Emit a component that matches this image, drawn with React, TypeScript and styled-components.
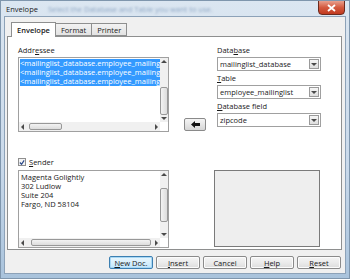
import React from 'react';
import styled, { createGlobalStyle } from 'styled-components';

const GlobalStyle = createGlobalStyle`
  html, body { margin: 0; padding: 0; background: #fff; }
  body { font-family: "Open Sans", "Liberation Sans", sans-serif; }
`

const addressLines = [
  '<mailinglist_database.employee_mailinglist.',
  '<mailinglist_database.employee_mailinglist.',
  '<mailinglist_database.employee_mailinglist.',
]

const senderLines = ['Magenta Golightly', '302 Ludlow', 'Suite 204', 'Fargo, ND 58104']

const Arrow = ({ dir }: { dir: 'up' | 'down' | 'left' | 'right' }) => {
  const pts = {
    up: '0,4 3,1 6,4',
    down: '0,2 3,5 6,2',
    left: '4,0 1,3 4,6',
    right: '2,0 5,3 2,6',
  }[dir]
  return (
    <svg width="6" height="6" viewBox="0 0 6 6">
      <polygon points={pts} fill="#4a4a4a" />
    </svg>
  )
}

const VScroll = ({ top, size }: { top: number, size: number }) => (
  <VBar>
    <Arrow dir="up" />
    <VTrack>
      <VThumb style={{ top, height: size }} />
    </VTrack>
    <Arrow dir="down" />
  </VBar>
)

const HScroll = ({ left, size }: { left: number, size: number }) => (
  <HBar>
    <Arrow dir="left" />
    <HTrack>
      <HThumb style={{ left, width: size }} />
    </HTrack>
    <Arrow dir="right" />
  </HBar>
)

const Combo = ({ value }: { value: string }) => (
  <ComboBox>
    <ComboText>{value}</ComboText>
    <ComboButton><Arrow dir="down" /></ComboButton>
  </ComboBox>
)

const App = () => {
  return (
    <Window>
      <GlobalStyle />
      <TitleBar>
        <Title>Envelope</Title>
        <Blur>Select the Database and Table you want to use.</Blur>
        <Close>
          <svg width="9" height="8" viewBox="0 0 9 8">
            <path d="M1 1 L8 7 M8 1 L1 7" stroke="#fff" strokeWidth="1.8" />
          </svg>
        </Close>
      </TitleBar>
      <Client>
        <TabBar>
          <Tab active>Envelope</Tab>
          <Tab>Format</Tab>
          <Tab>Printer</Tab>
        </TabBar>
        <Pane>
          <TopRow>
            <LeftCol>
              <Label>Addr<u>e</u>ssee</Label>
              <ListBox>
                <ListBody>
                  <ListText>
                    {addressLines.map((line, i) => (
                      <Selected key={i}>{line}</Selected>
                    ))}
                  </ListText>
                  <VScroll top={22} size={28} />
                </ListBody>
                <HScroll left={3} size={33} />
              </ListBox>
            </LeftCol>
            <MidCol>
              <ArrowButton>
                <svg width="9" height="7" viewBox="0 0 9 7">
                  <path d="M0 3.5 L4 0 L4 2 L9 2 L9 5 L4 5 L4 7 Z" fill="#111" />
                </svg>
              </ArrowButton>
            </MidCol>
            <RightCol>
              <Label>Data<u>b</u>ase</Label>
              <Combo value="mailinglist_database" />
              <Label><u>T</u>able</Label>
              <Combo value="employee_mailinglist" />
              <Label><u>D</u>atabase field</Label>
              <Combo value="zipcode" />
            </RightCol>
          </TopRow>
          <BottomRow>
            <LeftCol>
              <CheckRow>
                <CheckBox>
                  <svg width="7" height="7" viewBox="0 0 7 7">
                    <path d="M1 3.5 L3 5.5 L6 1" stroke="#2b4a8a" strokeWidth="1.4" fill="none" />
                  </svg>
                </CheckBox>
                <CheckLabel><u>S</u>ender</CheckLabel>
              </CheckRow>
              <SenderBox>
                <ListBody>
                  <SenderText>
                    {senderLines.map((line) => <div key={line}>{line}</div>)}
                  </SenderText>
                  <VScroll top={10} size={34} />
                </ListBody>
                <HScroll left={5} size={120} />
              </SenderBox>
            </LeftCol>
            <Preview />
          </BottomRow>
        </Pane>
        <ButtonRow>
          <Button primary><u>N</u>ew Doc.</Button>
          <Button><u>I</u>nsert</Button>
          <Button>Cancel</Button>
          <Button><u>H</u>elp</Button>
          <Button><u>R</u>eset</Button>
        </ButtonRow>
      </Client>
    </Window>
  )
};

const Window = styled.div`
  width: 350px;
  height: 279px;
  box-sizing: border-box;
  display: flex;
  flex-direction: column;
  background: linear-gradient(180deg, #dbe6f1 0%, #c9d9ea 60%, #a9c3dc 100%);
  border: 1px solid #7f96ad;
  padding: 0 3px 4px 3px;
  overflow: hidden;
`
const TitleBar = styled.div`
  height: 15px;
  display: flex;
  align-items: center;
  position: relative;
  font-size: 7.5px;
  color: #1a1a1a;
`
const Title = styled.span`
  margin-left: 2px;
`
const Blur = styled.span`
  margin-left: 10px;
  color: #8fa7c4;
  filter: blur(1.2px);
  white-space: nowrap;
`
const Close = styled.div`
  position: absolute;
  right: 1px;
  top: -1px;
  width: 27px;
  height: 15px;
  border-radius: 0 0 4px 4px;
  border: 1px solid #6b2a1e;
  box-sizing: border-box;
  background: linear-gradient(180deg, #e8a08e 0%, #d45a3f 50%, #c0391f 100%);
  display: flex;
  align-items: center;
  justify-content: center;
`
const Client = styled.div`
  flex: 1;
  display: flex;
  flex-direction: column;
  background: #f0f0f0;
  border: 1px solid #8da2b8;
  padding: 4px 3px 0 2px;
  font-size: 7.5px;
  color: #1a1a1a;
`
const TabBar = styled.div`
  display: flex;
  padding-left: 4px;
  height: 15px;
  align-items: flex-end;
`
const Tab = styled.div<{ active?: boolean }>`
  height: ${p => p.active ? 15 : 13}px;
  box-sizing: border-box;
  padding: 0 5px;
  display: flex;
  align-items: center;
  border: 1px solid #8e8f8f;
  border-bottom: ${p => p.active ? 'none' : '1px solid #8e8f8f'};
  margin-left: ${p => p.active ? 0 : -1}px;
  background: ${p => p.active ? '#fff' : 'linear-gradient(180deg, #f2f2f2, #e3e3e3)'};
  font-weight: ${p => p.active ? 600 : 400};
  position: relative;
  z-index: ${p => p.active ? 1 : 0};
  margin-bottom: ${p => p.active ? -1 : 0}px;
`
const Pane = styled.div`
  height: 214px;
  box-sizing: border-box;
  background: #fff;
  border: 1px solid #8e8f8f;
  padding: 8px 0 0 10px;
  display: flex;
  flex-direction: column;
`
const TopRow = styled.div`
  display: flex;
`
const BottomRow = styled.div`
  display: flex;
  align-items: flex-end;
  margin-top: 25px;
`
const LeftCol = styled.div`
  width: 151px;
  display: flex;
  flex-direction: column;
`
const MidCol = styled.div`
  width: 48px;
  display: flex;
  align-items: flex-end;
  padding-left: 15px;
  box-sizing: border-box;
`
const RightCol = styled.div`
  width: 104px;
  display: flex;
  flex-direction: column;
`
const Label = styled.div`
  height: 11px;
  line-height: 11px;
  margin-bottom: 1px;
  margin-top: 2px;
  &:first-child { margin-top: 0; }
`
const ListBox = styled.div`
  height: 75px;
  box-sizing: border-box;
  border: 1px solid #a0a0a0;
  display: flex;
  flex-direction: column;
`
const ListBody = styled.div`
  flex: 1;
  display: flex;
  min-height: 0;
`
const ListText = styled.div`
  flex: 1;
  overflow: hidden;
  padding: 1px 0 0 1px;
`
const Selected = styled.div`
  background: #3399ff;
  color: #fff;
  height: 9px;
  line-height: 9px;
  white-space: nowrap;
`
const VBar = styled.div`
  width: 8px;
  display: flex;
  flex-direction: column;
  align-items: center;
  background: #f0f0f0;
  padding: 1px 0;
`
const VTrack = styled.div`
  flex: 1;
  width: 100%;
  position: relative;
`
const VThumb = styled.div`
  position: absolute;
  left: 0;
  right: 0;
  border: 1px solid #989898;
  border-radius: 2px;
  background: linear-gradient(90deg, #f3f3f3, #dcdcdc);
  box-sizing: border-box;
`
const HBar = styled.div`
  height: 9px;
  display: flex;
  align-items: center;
  background: #f0f0f0;
  padding: 0 1px;
  margin-right: 8px;
`
const HTrack = styled.div`
  flex: 1;
  height: 100%;
  position: relative;
`
const HThumb = styled.div`
  position: absolute;
  top: 1px;
  bottom: 1px;
  border: 1px solid #989898;
  border-radius: 2px;
  background: linear-gradient(180deg, #f3f3f3, #dcdcdc);
  box-sizing: border-box;
`
const ComboBox = styled.div`
  height: 14px;
  box-sizing: border-box;
  border: 1px solid #a0a0a0;
  display: flex;
  background: #fff;
`
const ComboText = styled.div`
  flex: 1;
  padding-left: 2px;
  line-height: 12px;
  white-space: nowrap;
  overflow: hidden;
`
const ComboButton = styled.div`
  width: 10px;
  margin: 1px;
  border: 1px solid #9a9a9a;
  box-sizing: border-box;
  background: linear-gradient(180deg, #f6f6f6, #dedede);
  display: flex;
  align-items: center;
  justify-content: center;
`
const ArrowButton = styled.div`
  width: 22px;
  height: 13px;
  box-sizing: border-box;
  border: 1px solid #8a8a8a;
  border-radius: 2px;
  background: linear-gradient(180deg, #f5f5f5 0%, #e6e6e6 50%, #d6d6d6 100%);
  display: flex;
  align-items: center;
  justify-content: center;
  margin-bottom: 1px;
`
const CheckRow = styled.div`
  display: flex;
  align-items: center;
  height: 10px;
  margin-bottom: 3px;
`
const CheckBox = styled.div`
  width: 8px;
  height: 8px;
  box-sizing: border-box;
  border: 1px solid #8f8f8f;
  background: #f4f4f4;
  display: flex;
  align-items: center;
  justify-content: center;
  margin-right: 3px;
`
const CheckLabel = styled.span``
const SenderBox = styled(ListBox)`
  height: 78px;
`
const SenderText = styled.div`
  flex: 1;
  padding: 2px 0 0 2px;
  line-height: 9px;
`
const Preview = styled.div`
  width: 106px;
  height: 77px;
  box-sizing: border-box;
  margin-left: 45px;
  margin-bottom: 1px;
  border: 1px solid #7a7a7a;
  background: #eeeeee;
`
const ButtonRow = styled.div`
  display: flex;
  justify-content: flex-end;
  gap: 3px;
  padding: 6px 1px 0 0;
`
const Button = styled.div<{ primary?: boolean }>`
  width: 44px;
  height: 13px;
  box-sizing: border-box;
  border: 1px solid ${p => p.primary ? '#3c7fb1' : '#8a8a8a'};
  border-radius: 2px;
  background: ${p => p.primary
    ? 'linear-gradient(180deg, #eaf6fd 0%, #d9f0fc 50%, #bee6fd 100%)'
    : 'linear-gradient(180deg, #f5f5f5 0%, #ebebeb 50%, #dddddd 100%)'};
  box-shadow: inset 0 0 0 1px ${p => p.primary ? '#a8d8f5' : '#fcfcfc'};
  display: flex;
  align-items: center;
  justify-content: center;
`

export default App;
